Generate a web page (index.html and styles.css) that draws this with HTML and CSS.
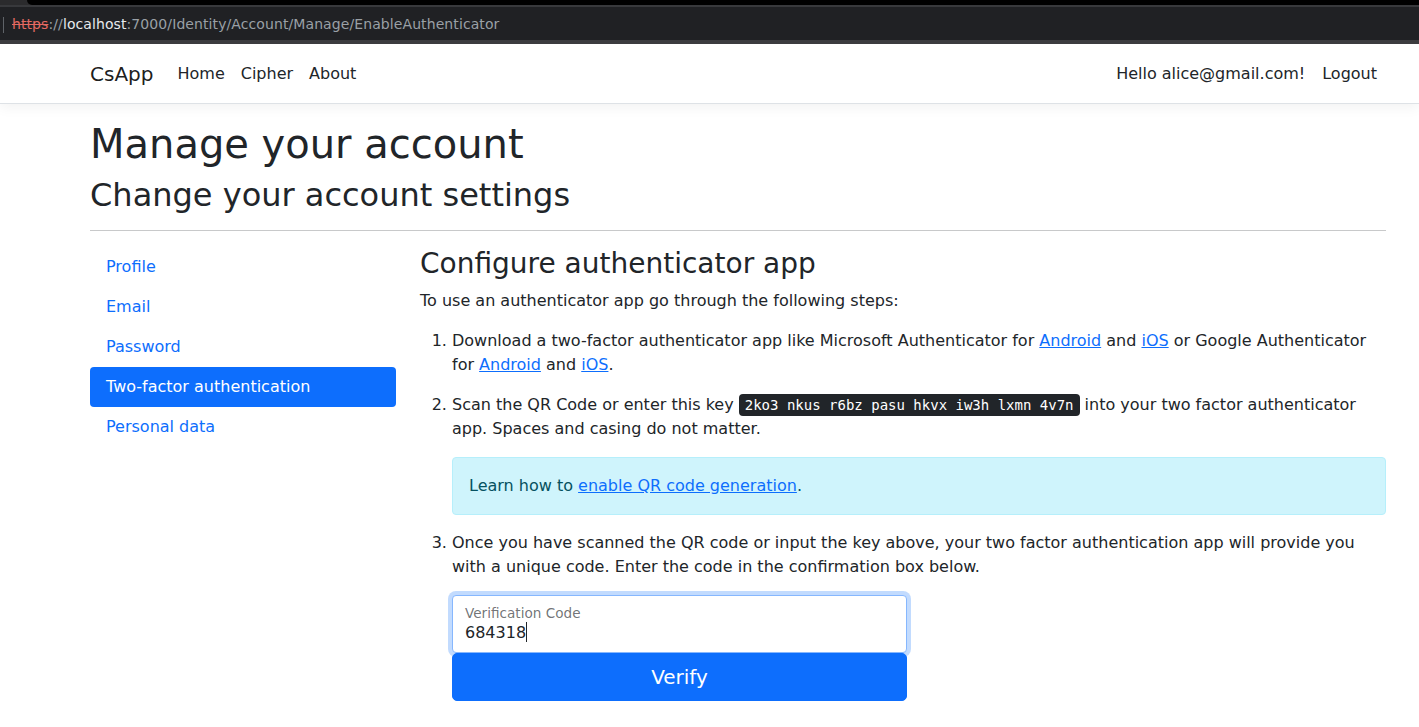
FILE: index.html
```html
<!DOCTYPE html>
<html lang="en">
<head>
<meta charset="utf-8">
<title>Two-factor authentication</title>
<link rel="stylesheet" href="styles.css">
</head>
<body>
<div class="chrome">
  <div class="chrome-top"></div>
  <div class="urlbar">
    <span class="url-sep"></span>
    <span class="url"><span class="url-insecure">https</span><span class="url-dim">://</span><span class="url-host">localhost</span><span class="url-dim">:7000/Identity/Account/Manage/EnableAuthenticator</span></span>
  </div>
  <div class="chrome-bottom"></div>
</div>

<header class="navbar">
  <div class="container navbar-inner">
    <a class="brand" href="#">CsApp</a>
    <nav class="nav-main">
      <a class="nav-link" href="#">Home</a>
      <a class="nav-link" href="#">Cipher</a>
      <a class="nav-link" href="#">About</a>
    </nav>
    <nav class="nav-user">
      <a class="nav-link nav-hello" href="#">Hello alice@gmail.com!</a>
      <a class="nav-link" href="#">Logout</a>
    </nav>
  </div>
</header>

<main class="container main">
  <h1 class="title">Manage your account</h1>
  <div>
    <h2 class="subtitle">Change your account settings</h2>
    <hr class="divider">
    <div class="layout">
      <nav class="pills">
        <a class="pill" href="#">Profile</a>
        <a class="pill" href="#">Email</a>
        <a class="pill" href="#">Password</a>
        <a class="pill active" href="#">Two-factor authentication</a>
        <a class="pill" href="#">Personal data</a>
      </nav>
      <section class="content">
        <h3 class="section-title">Configure authenticator app</h3>
        <div>
          <p class="para">To use an authenticator app go through the following steps:</p>
          <ol class="steps">
            <li>
              <p class="para">Download a two-factor authenticator app like Microsoft Authenticator for
                <a class="link" href="#">Android</a> and
                <a class="link" href="#">iOS</a> or
                Google Authenticator for
                <a class="link" href="#">Android</a> and
                <a class="link" href="#">iOS</a>.</p>
            </li>
            <li>
              <p class="para">Scan the QR Code or enter this key <kbd class="key">2ko3 nkus r6bz pasu hkvx iw3h lxmn 4v7n</kbd> into your two factor authenticator app. Spaces and casing do not matter.</p>
              <div class="alert">Learn how to <a class="link" href="#">enable QR code generation</a>.</div>
            </li>
            <li>
              <p class="para">Once you have scanned the QR code or input the key above, your two factor authentication app will provide you with a unique code. Enter the code in the confirmation box below.</p>
              <form class="verify-form">
                <div class="field">
                  <span class="field-label">Verification Code</span>
                  <span class="field-value">684318<span class="caret"></span></span>
                </div>
                <button class="btn-verify" type="button">Verify</button>
              </form>
            </li>
          </ol>
        </div>
      </section>
    </div>
  </div>
</main>
</body>
</html>
```

FILE: styles.css
```css
* { box-sizing: border-box; }

html, body {
  margin: 0;
  padding: 0;
  background: #fff;
}

body {
  font-family: "DejaVu Sans", "Noto Sans", sans-serif;
  font-size: 16px;
  line-height: 1.5;
  color: #212529;
  overflow: hidden;
}

/* Browser chrome */
.chrome {
  height: 44px;
  background: #2b2b2d;
  display: flex;
  flex-direction: column;
}
.chrome-top {
  height: 5px;
  margin-left: 27px;
  background: #000;
  border-bottom-left-radius: 6px;
}
.urlbar {
  height: 35px;
  background: #202124;
  display: flex;
  align-items: center;
  border-top: 2px solid #38393c;
  padding-top: 2px;
}
.url-sep {
  width: 1px;
  height: 16px;
  background: #5f6368;
  margin-left: 3px;
  margin-right: 8px;
}
.url {
  font-family: "DejaVu Sans", sans-serif;
  font-size: 14px;
  color: #9aa0a6;
  letter-spacing: 0.09px;
}
.url-insecure {
  color: #e46962;
  text-decoration: line-through;
}
.url-dim { color: #9aa0a6; }
.url-host { color: #e8eaed; }
.chrome-bottom {
  height: 4px;
  background: #3c3c3f;
}

/* Layout container */
.container {
  width: 1296px;
  margin-left: 90px;
}

/* Navbar */
.navbar {
  background: #fff;
  border-bottom: 1px solid #dee2e6;
  box-shadow: 0 4px 12px rgba(0, 0, 0, 0.05);
}
.navbar-inner {
  height: 59px;
  display: flex;
  align-items: center;
}
.brand {
  font-size: 20px;
  line-height: 30px;
  color: rgba(0, 0, 0, 0.9);
  text-decoration: none;
  margin-right: 16px;
}
.nav-main, .nav-user {
  display: flex;
}
.nav-user {
  margin-left: auto;
  margin-right: 1px;
}
.nav-link {
  padding: 8px;
  color: #212529;
  text-decoration: none;
}
.nav-hello {
  padding-right: 9px;
}

/* Main */
.main {
  padding-top: 16px;
}
.title {
  font-size: 40px;
  line-height: 1.2;
  font-weight: 500;
  margin: 0 0 8px;
}
.subtitle {
  font-size: 32px;
  line-height: 1.2;
  font-weight: 500;
  margin: 0 0 8px;
}
.divider {
  margin: 16px 0;
  border: 0;
  border-top: 1px solid #c8c9ca;
}
.layout {
  display: grid;
  grid-template-columns: 306px 966px;
  column-gap: 24px;
}

.pills {
  display: flex;
  flex-direction: column;
}
.pill {
  padding: 8px 16px;
  color: #0d6efd;
  text-decoration: none;
  border-radius: 4px;
}
.pill.active {
  background: #0d6efd;
  color: #fff;
}

.section-title {
  font-size: 28px;
  line-height: 1.2;
  font-weight: 500;
  margin: 0 0 8px;
}
.para {
  margin: 0 0 16px;
}
.steps {
  margin: 0 0 16px;
  padding-left: 32px;
}
.link {
  color: #0d6efd;
  text-decoration: underline;
}
.key {
  font-family: "DejaVu Sans Mono", "Liberation Mono", monospace;
  font-size: 14px;
  padding: 3px 6px;
  background: #212529;
  color: #fff;
  border-radius: 4px;
}
.alert {
  padding: 16px;
  margin-bottom: 16px;
  background: #cff4fc;
  border: 1px solid #b6effb;
  border-radius: 4px;
  color: #055160;
}

.verify-form {
  width: 455px;
}
.field {
  position: relative;
  height: 58px;
  border: 1px solid #86b7fe;
  border-radius: 4px;
  background: #fff;
  box-shadow: 0 0 0 4px rgba(13, 110, 253, 0.25);
  padding: 25px 12px 0;
}
.field-label {
  position: absolute;
  left: 12px;
  top: 7px;
  font-size: 13.6px;
  line-height: 20px;
  color: rgba(33, 37, 41, 0.65);
}
.field-value {
  display: block;
  font-size: 16px;
  line-height: 24px;
  color: #212529;
}
.caret {
  display: inline-block;
  width: 1px;
  height: 20px;
  background: #212529;
  vertical-align: -4px;
}
.btn-verify {
  display: block;
  width: 100%;
  height: 48px;
  background: #0d6efd;
  color: #fff;
  border: 1px solid #0d6efd;
  border-radius: 5px;
  font-family: inherit;
  font-size: 20px;
  line-height: 30px;
  padding: 8px 16px;
}
```
